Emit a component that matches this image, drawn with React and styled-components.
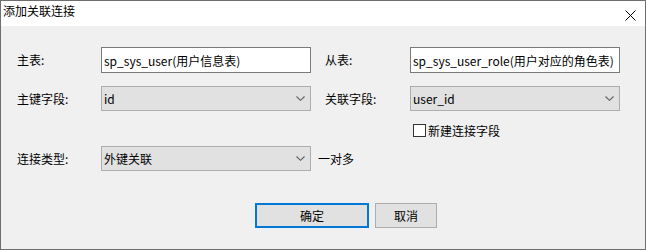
import React from "react";
import styled, { createGlobalStyle } from "styled-components";

const Global = createGlobalStyle`
  html, body { margin: 0; padding: 0; background: #ffffff; }
  * { box-sizing: border-box; }
`;

const FONT = `"Noto Sans CJK SC", "Noto Sans", sans-serif`;

const Window = styled.div`
  width: 646px;
  height: 250px;
  border: 1px solid #6e6e6e;
  background: #f0f0f0;
  display: flex;
  flex-direction: column;
  font-family: ${FONT};
  font-size: 12px;
  color: #000;
`;

const TitleBar = styled.div`
  height: 25px;
  background: #ffffff;
  display: flex;
  align-items: flex-start;
  justify-content: space-between;
  padding: 2px 9px 0 2px;
`;

const Title = styled.div`
  line-height: 16px;
  font-size: 12px;
`;

const CloseIcon = styled.svg`
  width: 11px;
  height: 11px;
  margin-top: 7px;
`;

const Body = styled.div`
  flex: 1;
  display: flex;
  flex-direction: column;
  padding: 21px 26px 0 16px;
`;

const Row = styled.div`
  display: flex;
  align-items: center;
  margin-top: ${(p) => p.$mt || 0}px;
  height: ${(p) => p.$h || 25}px;
`;

const Label = styled.div`
  width: ${(p) => p.$w}px;
  flex: none;
  line-height: 16px;
`;

const TextBox = styled.div`
  width: 210px;
  height: 26px;
  border: 1px solid #7a7a7a;
  background: #ffffff;
  display: flex;
  align-items: center;
  padding: 0 2px;
  white-space: nowrap;
  overflow: hidden;
  flex: none;
`;

const Combo = styled.div`
  width: 210px;
  height: 25px;
  border: 1px solid #adadad;
  background: #e1e1e1;
  display: flex;
  align-items: center;
  justify-content: space-between;
  padding: 0 4px 0 2px;
  flex: none;
`;

const Chevron = styled.svg`
  width: 9px;
  height: 5px;
  margin-right: 1px;
`;

const Gap = styled.div`
  width: ${(p) => p.$w}px;
  flex: none;
`;

const After = styled.div`
  margin-left: 7px;
`;

const CheckRow = styled.div`
  display: flex;
  align-items: center;
  margin-top: 12px;
  margin-left: 396px;
  height: 14px;
`;

const Box = styled.div`
  width: 13px;
  height: 13px;
  border: 1px solid #333333;
  background: #ffffff;
  margin-right: 2px;
`;

const Buttons = styled.div`
  display: flex;
  justify-content: flex-start;
  gap: 6px;
  margin-top: 32px;
  margin-left: 238px;
`;

const Button = styled.div`
  width: ${(p) => p.$w}px;
  height: 25px;
  background: #e1e1e1;
  border: ${(p) => (p.$primary ? "2px solid #0078d7" : "1px solid #adadad")};
  display: flex;
  align-items: center;
  justify-content: center;
`;

const ChevronIcon = () => (
  <Chevron viewBox="0 0 9 5">
    <polyline points="0.5,0.5 4.5,4.3 8.5,0.5" fill="none" stroke="#606060" strokeWidth="1.1" />
  </Chevron>
);

export default function App() {
  return (
    <>
      <Global />
      <Window>
        <TitleBar>
          <Title>添加关联连接</Title>
          <CloseIcon viewBox="0 0 11 11">
            <path d="M0.5 0.5 L10.5 10.5 M10.5 0.5 L0.5 10.5" stroke="#000" strokeWidth="1" />
          </CloseIcon>
        </TitleBar>
        <Body>
          <Row $h={26}>
            <Label $w={84}>主表:</Label>
            <TextBox>sp_sys_user(用户信息表)</TextBox>
            <Gap $w={14} />
            <Label $w={85}>从表:</Label>
            <TextBox>sp_sys_user_role(用户对应的角色表)</TextBox>
          </Row>
          <Row $mt={13}>
            <Label $w={84}>主键字段:</Label>
            <Combo>
              <span>id</span>
              <ChevronIcon />
            </Combo>
            <Gap $w={14} />
            <Label $w={85}>关联字段:</Label>
            <Combo>
              <span>user_id</span>
              <ChevronIcon />
            </Combo>
          </Row>
          <CheckRow>
            <Box />
            <span>新建连接字段</span>
          </CheckRow>
          <Row $mt={9}>
            <Label $w={84}>连接类型:</Label>
            <Combo>
              <span>外键关联</span>
              <ChevronIcon />
            </Combo>
            <After>一对多</After>
          </Row>
          <Buttons>
            <Button $w={114} $primary>确定</Button>
            <Button $w={62}>取消</Button>
          </Buttons>
        </Body>
      </Window>
    </>
  );
}
